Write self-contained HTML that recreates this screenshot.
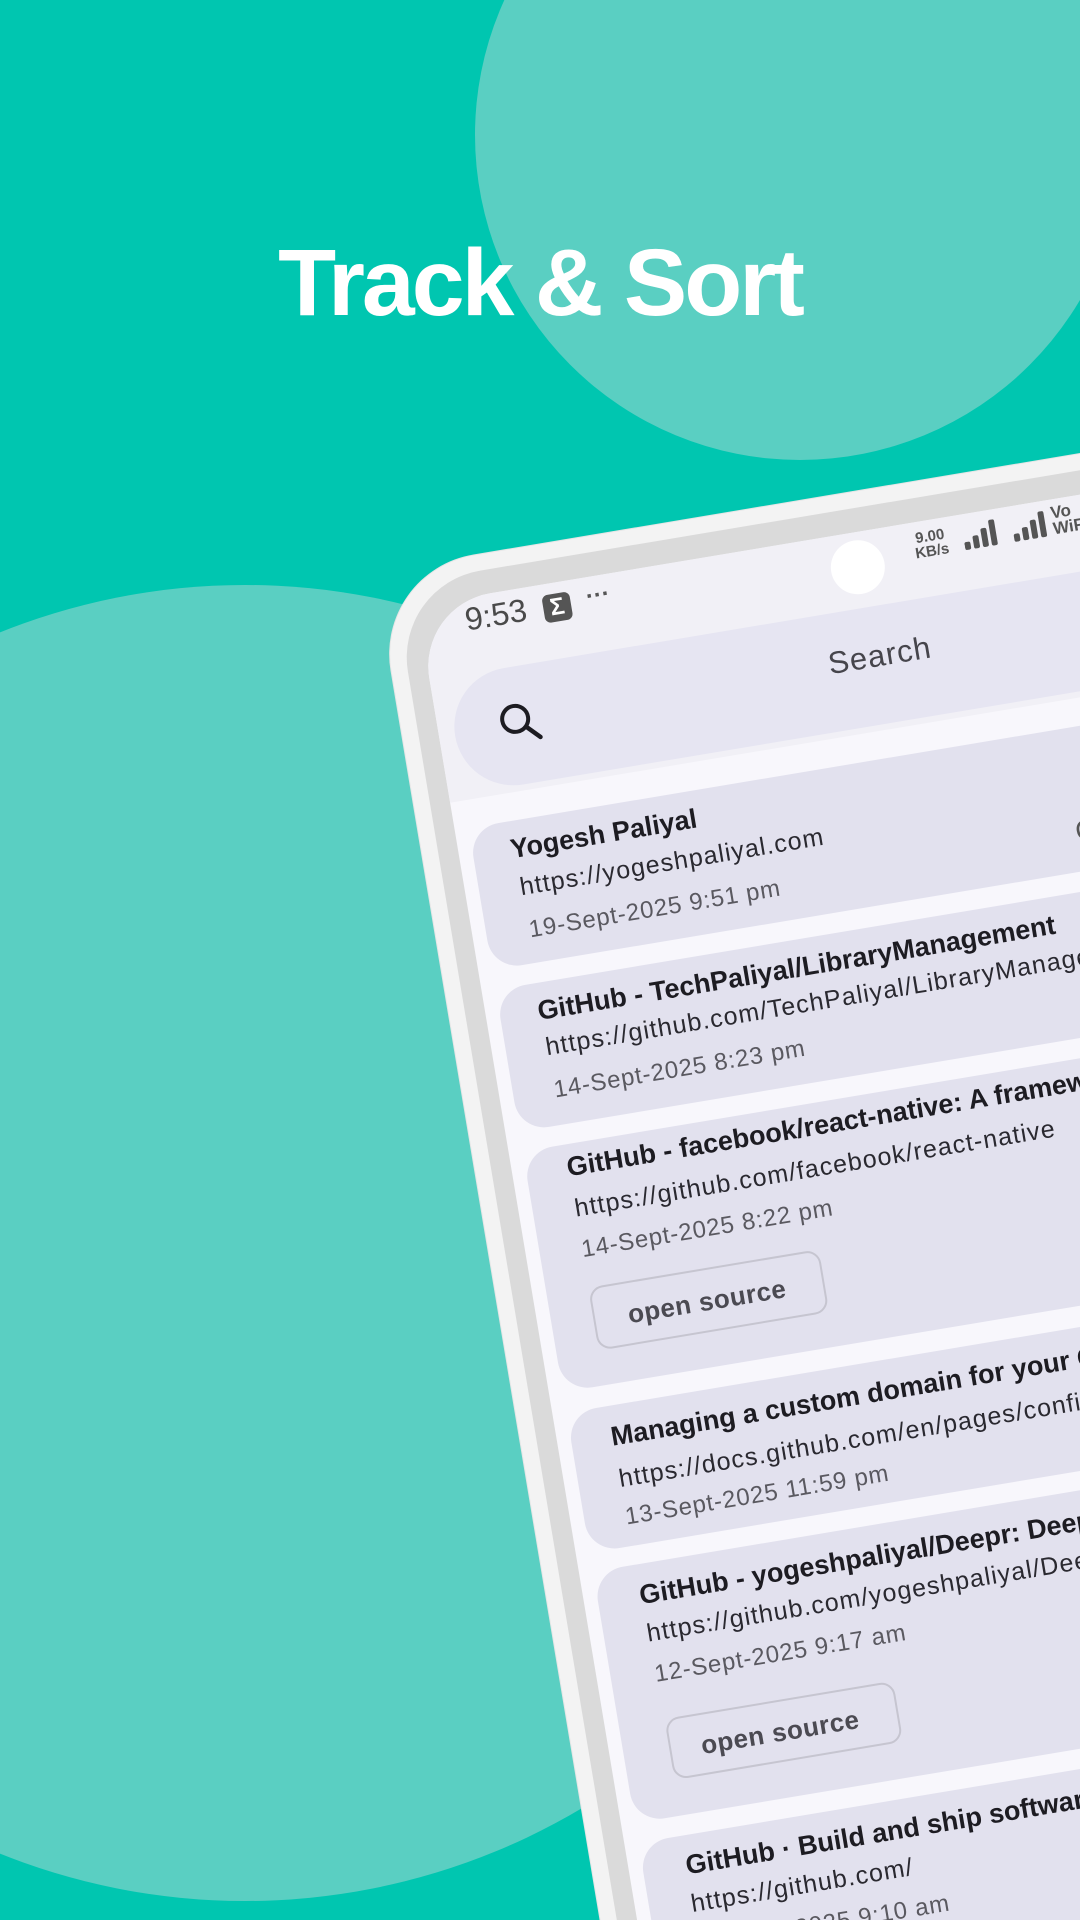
<!DOCTYPE html>
<html><head><meta charset="utf-8"><style>
*{margin:0;padding:0;box-sizing:border-box}
html,body{width:1080px;height:1920px;overflow:hidden}
body{font-family:"Liberation Sans",Arial,sans-serif}
#wrap{position:relative;width:1080px;height:1920px;overflow:hidden;background:#00c6b0}
.c{position:absolute;border-radius:50%;background:#5acfc2}
h1{position:absolute;left:0;width:1080px;top:236px;text-align:center;color:#fff;font-size:95px;font-weight:bold;letter-spacing:-3px;line-height:1}
#ph{position:absolute;left:375px;top:572px;width:1000px;height:1800px;transform-origin:0 0;transform:rotate(-9.5deg);border-radius:100px;background:#f3f3f3;box-shadow:0 0 0 1px #e6e6e6}
.ring{position:absolute;left:16px;top:16px;right:0;bottom:0;border-radius:88px;background:#dadada}
.scr{position:absolute;left:36px;top:40px;right:0;bottom:0;border-radius:74px;background:#f8f7fc;overflow:hidden}
.a{position:absolute;white-space:nowrap;line-height:1}
.hdr{position:absolute;left:0;top:0;width:1000px;height:200px;background:#f1f0f6}
.card{position:absolute;left:14px;width:1100px;background:#e2e1ee;border-radius:30px}
.t{font-size:27px;font-weight:bold;color:#1d1c22}
.u{font-size:25px;color:#2a2930;letter-spacing:1.1px}
.d{font-size:24px;color:#5a5960;letter-spacing:0.8px}
.chip{position:absolute;border:2px solid #c6c5d0;border-radius:14px}
.ct{font-size:26px;font-weight:bold;color:#4b4a52;letter-spacing:0.5px}
</style></head><body><div id="wrap">
<div class="c" style="left:475px;top:-190px;width:650px;height:650px"></div>
<div class="c" style="left:-413px;top:585px;width:1316px;height:1316px"></div>
<h1>Track &amp; Sort</h1>
<div id="ph">
 <div class="ring"></div>
 <div class="scr">
  <div class="hdr"></div>
  <div class="a" style="left:45px;top:6px;font-size:32px;color:#4a4a4a">9:53</div>
  <div class="a" style="left:124px;top:11px;width:28px;height:28px;border-radius:6px;background:#555;color:#fff;font-size:24px;font-weight:bold;text-align:center;line-height:28px">Σ</div>
  <div class="a" style="left:168px;top:8px;font-size:24px;font-weight:bold;color:#555">···</div>
  <div style="position:absolute;left:414px;top:8px;width:54px;height:54px;border-radius:50%;background:#fff"></div>
  <div class="a" style="left:500px;top:9px;font-size:15px;font-weight:bold;color:#555;line-height:15px;text-align:center">9.00<br>KB/s</div>
  <svg class="a" style="left:550px;top:6px" width="120" height="32"><g fill="#555"><rect x="0" y="22" width="6" height="8" rx="2"/><rect x="9" y="17" width="6" height="13" rx="2"/><rect x="18" y="11" width="6" height="19" rx="2"/><rect x="27" y="4" width="6" height="26" rx="2"/><rect x="50" y="22" width="6" height="8" rx="2"/><rect x="59" y="17" width="6" height="13" rx="2"/><rect x="68" y="11" width="6" height="19" rx="2"/><rect x="77" y="4" width="6" height="26" rx="2"/></g></svg>
  <div class="a" style="left:640px;top:6px;font-size:17px;font-weight:bold;color:#555;line-height:16px">Vo<br>WiFi</div>
  <div style="position:absolute;left:16px;top:76px;width:1100px;height:118px;border-radius:59px;background:#e6e5f2"></div>
  <svg class="a" style="left:60px;top:110px" width="46" height="46" viewBox="0 0 46 46"><circle cx="18" cy="18" r="13" fill="none" stroke="#1d1c22" stroke-width="4"/><line x1="28" y1="28" x2="40" y2="40" stroke="#1d1c22" stroke-width="4.5" stroke-linecap="round"/></svg>
  <div class="a" style="left:396px;top:110px;font-size:31px;color:#46454c;letter-spacing:1px">Search</div>

  <div class="card" style="top:228px;height:144px"></div>
  <div class="a t" style="left:52px;top:243px">Yogesh Paliyal</div>
  <div class="a u" style="left:55px;top:283px">https://yogeshpaliyal.com</div>
  <div class="a d" style="left:57px;top:327px">19-Sept-2025 9:51 pm</div>
  <div class="a" style="left:612px;top:318px;font-size:28px;color:#555">C</div>

  <div class="card" style="top:392px;height:144px"></div>
  <div class="a t" style="left:52px;top:407px">GitHub - TechPaliyal/LibraryManagement</div>
  <div class="a u" style="left:54px;top:445px">https://github.com/TechPaliyal/LibraryManagement</div>
  <div class="a d" style="left:55px;top:489px">14-Sept-2025 8:23 pm</div>

  <div class="card" style="top:556px;height:244px"></div>
  <div class="a t" style="left:55px;top:566px">GitHub - facebook/react-native: A framework for building native apps</div>
  <div class="a u" style="left:56px;top:609px">https://github.com/facebook/react-native</div>
  <div class="a d" style="left:56px;top:651px">14-Sept-2025 8:22 pm</div>
  <div class="chip" style="left:56px;top:701px;width:234px;height:64px"></div>
  <div class="a ct" style="left:91px;top:721px">open source</div>

  <div class="card" style="top:821px;height:142px"></div>
  <div class="a t" style="left:54px;top:839px">Managing a custom domain for your GitHub Pages site</div>
  <div class="a u" style="left:55px;top:883px">https://docs.github.com/en/pages/configuring-a-custom-domain</div>
  <div class="a d" style="left:55px;top:922px">13-Sept-2025 11:59 pm</div>

  <div class="card" style="top:982px;height:255px"></div>
  <div class="a t" style="left:56px;top:1000px">GitHub - yogeshpaliyal/Deepr: Deeplink manager</div>
  <div class="a u" style="left:57px;top:1040px">https://github.com/yogeshpaliyal/Deepr</div>
  <div class="a d" style="left:58px;top:1082px">12-Sept-2025 9:17 am</div>
  <div class="chip" style="left:60px;top:1139px;width:232px;height:62px"></div>
  <div class="a ct" style="left:92px;top:1158px">open source</div>

  <div class="card" style="top:1257px;height:200px"></div>
  <div class="a t" style="left:57px;top:1274px">GitHub · Build and ship software on a single platform</div>
  <div class="a u" style="left:56px;top:1314px">https://github.com/</div>
  <div class="a d" style="left:58px;top:1356px">11-Sept-2025 9:10 am</div>
 </div>
</div>
</div></body></html>
